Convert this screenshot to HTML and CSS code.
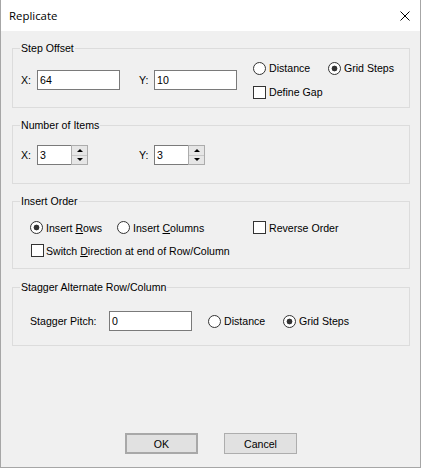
FILE: index.html
```html
<!DOCTYPE html>
<html>
<head>
<meta charset="utf-8">
<link rel="stylesheet" href="styles.css">
</head>
<body>
<div class="window">
  <div class="titlebar">
    <span class="title">Replicate</span>
    <svg class="close" width="10" height="10" viewBox="0 0 10 10"><path d="M0.5 0.5 L9.5 9.5 M9.5 0.5 L0.5 9.5" stroke="#000" stroke-width="1" fill="none"/></svg>
  </div>
  <div class="client">
    <section class="group g1">
      <div class="legend">Step Offset</div>
      <div class="row r1">
        <span class="lbl lx">X:</span>
        <div class="edit w83">64</div>
        <span class="lbl ly">Y:</span>
        <div class="edit w83">10</div>
        <div class="col">
          <div class="line">
            <span class="opt w75"><span class="radio"></span><span class="txt">Distance</span></span>
            <span class="opt"><span class="radio on"></span><span class="txt">Grid Steps</span></span>
          </div>
          <div class="line">
            <span class="opt"><span class="check"></span><span class="txt">Define Gap</span></span>
          </div>
        </div>
      </div>
    </section>

    <section class="group g2">
      <div class="legend">Number of Items</div>
      <div class="row r2">
        <span class="lbl lx">X:</span>
        <div class="spin">
          <div class="spintext">3</div>
          <div class="spinbtns"><span class="sb up"><i class="tri-up"></i></span><span class="sb down"><i class="tri-down"></i></span></div>
        </div>
        <span class="lbl ly ly2">Y:</span>
        <div class="spin">
          <div class="spintext">3</div>
          <div class="spinbtns"><span class="sb up"><i class="tri-up"></i></span><span class="sb down"><i class="tri-down"></i></span></div>
        </div>
      </div>
    </section>

    <section class="group g3">
      <div class="legend">Insert Order</div>
      <div class="row r3a">
        <span class="opt w87"><span class="radio on"></span><span class="txt">Insert <u>R</u>ows</span></span>
        <span class="opt w136"><span class="radio"></span><span class="txt">Insert <u>C</u>olumns</span></span>
        <span class="opt"><span class="check"></span><span class="txt">Reverse Order</span></span>
      </div>
      <div class="row r3b">
        <span class="opt gap2"><span class="check"></span><span class="txt">Switch <u>D</u>irection at end of Row/Column</span></span>
      </div>
    </section>

    <section class="group g4">
      <div class="legend">Stagger Alternate Row/Column</div>
      <div class="row r4">
        <span class="lbl lpitch">Stagger Pitch:</span>
        <div class="edit w83">0</div>
        <span class="opt w75 ml16"><span class="radio"></span><span class="txt">Distance</span></span>
        <span class="opt"><span class="radio on"></span><span class="txt">Grid Steps</span></span>
      </div>
    </section>

    <div class="buttons">
      <button class="btn default">OK</button>
      <button class="btn">Cancel</button>
    </div>
  </div>
</div>
</body>
</html>
```

FILE: styles.css
```css
html, body {
  margin: 0;
  padding: 0;
  background: #f0f0f0;
}

.window {
  width: 421px;
  height: 468px;
  box-sizing: border-box;
  border: 1px solid #a6a6a6;
  border-top: none;
  display: flex;
  flex-direction: column;
  background: #f0f0f0;
  font-family: "Liberation Sans", Arial, sans-serif;
  font-size: 10.6px;
  color: #000;
}

.titlebar {
  height: 31px;
  flex: none;
  background: #fff;
  display: flex;
  align-items: center;
  justify-content: space-between;
  padding: 0 10px 0 8px;
}

.title {
  font-family: "Open Sans", "Noto Sans", sans-serif;
  font-size: 11.4px;
  line-height: 16px;
  margin-top: 1px;
}

.close {
  display: block;
}

.client {
  flex: 1;
  display: flex;
  flex-direction: column;
  padding: 0 10px 0 11px;
}

.group {
  border: 1px solid #dcdcdc;
  box-sizing: border-box;
}

.g1 { margin-top: 17px; height: 60px; }
.g2 { margin-top: 17px; height: 59px; }
.g3 { margin-top: 17px; height: 68px; }
.g4 { margin-top: 18px; height: 59px; }

.legend {
  width: fit-content;
  margin: -7px 0 0 7px;
  padding: 0 1px;
  line-height: 13px;
  height: 13px;
  background: #f0f0f0;
  white-space: nowrap;
}

.row {
  display: flex;
  align-items: center;
  padding-left: 8px;
  white-space: nowrap;
}

.r1 { margin-top: 1px; height: 48px; }
.r2 { margin-top: 13px; height: 20px; }
.r3a { margin-top: 8px; height: 23px; padding-left: 17px; }
.r3b { height: 23px; padding-left: 18px; }
.r4 { margin-top: 17px; height: 20px; padding-left: 17px; }

.lbl { display: block; }
.lx { width: 16px; }
.ly { width: 15px; margin-left: 19px; }
.ly2 { margin-left: 51px; }
.lpitch { width: 79px; }

.edit {
  height: 20px;
  box-sizing: border-box;
  border: 1px solid #7a7a7a;
  background: #fff;
  padding-left: 2px;
  line-height: 18px;
}

.w83 { width: 83px; }

.col {
  margin-left: 16px;
  display: flex;
  flex-direction: column;
}

.line {
  height: 24px;
  display: flex;
  align-items: center;
}

.opt {
  display: flex;
  align-items: center;
  gap: 3px;
}

.txt { white-space: nowrap; }

.gap2 { gap: 2px; }
.w75 { width: 75px; }
.w87 { width: 87px; }
.w136 { width: 136px; }
.ml16 { margin-left: 16px; }

.radio {
  width: 13px;
  height: 13px;
  box-sizing: border-box;
  border: 1px solid #333;
  border-radius: 50%;
  background: #fff;
  flex: none;
}

.radio.on {
  background: radial-gradient(circle, #333 0 2.6px, #fff 3.2px);
}

.check {
  width: 13px;
  height: 13px;
  box-sizing: border-box;
  border: 1px solid #333;
  background: #fff;
  flex: none;
}

u {
  text-decoration: underline;
  text-underline-offset: 1px;
}

.spin {
  width: 51px;
  height: 20px;
  display: flex;
}

.spintext {
  flex: 1;
  box-sizing: border-box;
  border: 1px solid #7a7a7a;
  border-right: none;
  background: #fff;
  padding-left: 2px;
  line-height: 18px;
}

.spinbtns {
  width: 17px;
  box-sizing: border-box;
  border: 1px solid #acacac;
  display: flex;
  flex-direction: column;
  background: #e6e6e6;
}

.sb {
  flex: 1;
  display: flex;
  align-items: center;
  justify-content: center;
}

.sb.up { border-bottom: 1px solid #c8c8c8; }

.tri-up, .tri-down {
  display: block;
  width: 0;
  height: 0;
  border-left: 3px solid transparent;
  border-right: 3px solid transparent;
}

.tri-up { border-bottom: 3px solid #000; }
.tri-down { border-top: 3px solid #000; }

.buttons {
  margin-top: auto;
  margin-bottom: 13px;
  display: flex;
  justify-content: center;
  gap: 26px;
}

.btn {
  width: 73px;
  height: 21px;
  box-sizing: border-box;
  border: 1px solid #adadad;
  background: #e1e1e1;
  font-family: "Liberation Sans", Arial, sans-serif;
  font-size: 10.6px;
  color: #000;
  padding: 0;
  margin: 0;
  border-radius: 0;
}

.btn.default {
  border: 2px solid #a8a8a8;
}
```
